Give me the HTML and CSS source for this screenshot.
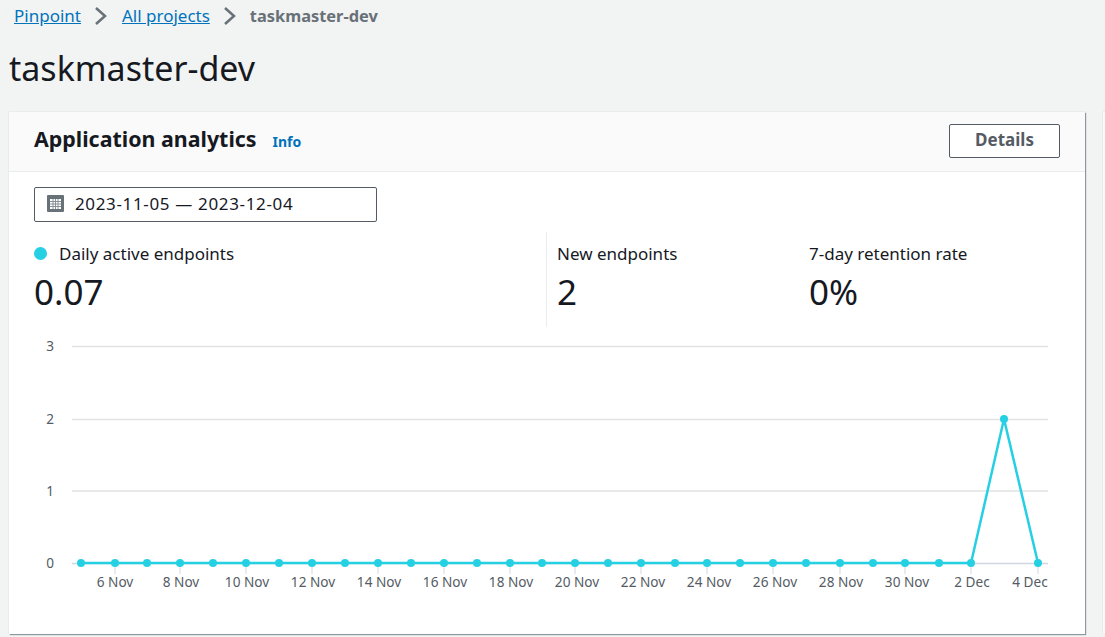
FILE: index.html
```html
<!DOCTYPE html>
<html lang="en">
<head>
    <meta charset="UTF-8">
    <title>taskmaster-dev - Pinpoint</title>
    <link rel="stylesheet" href="styles.css">
</head>
<body>
    <nav class="crumbs">
        <a href="#">Pinpoint</a>
        <svg class="crumb-sep" width="14" height="20" viewBox="0 0 14 20"><path d="M2 2l9 8-9 8" /></svg>
        <a href="#">All projects</a>
        <svg class="crumb-sep" width="14" height="20" viewBox="0 0 14 20"><path d="M2 2l9 8-9 8" /></svg>
        <span class="crumb-current">taskmaster-dev</span>
    </nav>
    <h1 class="page-title">taskmaster-dev</h1>

    <div class="content">
        <section class="card">
            <header class="card-head">
                <h2>Application analytics</h2>
                <a class="info" href="#">Info</a>
                <button class="details">Details</button>
            </header>
            <div class="card-body">
                <div class="date-range">
                    <svg width="17" height="17" viewBox="0 0 17 17">
                        <rect width="17" height="17" rx="1" fill="#687078" />
                        <path d="M3 4h11v10H3z" fill="#fff" />
                        <path d="M6 4v10M8.500 4v10M11 4v10M3 6.500h11M3 9h11M3 11.500h11" stroke="#879196" />
                    </svg>
                    <span>2023-11-05 — 2023-12-04</span>
                </div>
                <div class="stats">
                    <div class="stat stat-main">
                        <div class="stat-label"><span class="dot"></span>Daily active endpoints</div>
                        <div class="stat-value">0.07</div>
                    </div>
                    <div class="stat stat-new">
                        <div class="stat-label">New endpoints</div>
                        <div class="stat-value">2</div>
                    </div>
                    <div class="stat">
                        <div class="stat-label">7-day retention rate</div>
                        <div class="stat-value">0%</div>
                    </div>
                </div>
                <svg class="chart" width="1076" height="270" viewBox="9 335 1076 270">
                    <path class="grid" d="M72 346.500h976M72 419.500h976M72 491h976" />
                    <path class="axis" d="M72 563.500h976" />
                    <path class="ticks" d="M115 564v10M180 564v10M246 564v10M312 564v10M378 564v10M444 564v10M510 564v10M575 564v10M641 564v10M707 564v10M773 564v10M840 564v10M905 564v10M971 564v10M1038 564v10" />
                    <g class="y-labels">
                        <text x="54" y="351">3</text>
                        <text x="54" y="424">2</text>
                        <text x="54" y="496">1</text>
                        <text x="54" y="568">0</text>
                    </g>
                    <g class="x-labels">
                        <text x="115" y="587">6 Nov</text>
                        <text x="181" y="587">8 Nov</text>
                        <text x="247" y="587">10 Nov</text>
                        <text x="313" y="587">12 Nov</text>
                        <text x="379" y="587">14 Nov</text>
                        <text x="445" y="587">16 Nov</text>
                        <text x="511" y="587">18 Nov</text>
                        <text x="577" y="587">20 Nov</text>
                        <text x="643" y="587">22 Nov</text>
                        <text x="709" y="587">24 Nov</text>
                        <text x="775" y="587">26 Nov</text>
                        <text x="841" y="587">28 Nov</text>
                        <text x="907" y="587">30 Nov</text>
                        <text x="972" y="587">2 Dec</text>
                        <text x="1030" y="587">4 Dec</text>
                    </g>
                    <polyline class="line" points="81,563 971,563 1004,419 1038,563" />
                    <g class="points">
                        <circle cx="81" cy="563" r="4" /><circle cx="115" cy="563" r="4" /><circle cx="147" cy="563" r="4" />
                        <circle cx="180" cy="563" r="4" /><circle cx="213" cy="563" r="4" /><circle cx="246" cy="563" r="4" />
                        <circle cx="279" cy="563" r="4" /><circle cx="312" cy="563" r="4" /><circle cx="345" cy="563" r="4" />
                        <circle cx="378" cy="563" r="4" /><circle cx="411" cy="563" r="4" /><circle cx="444" cy="563" r="4" />
                        <circle cx="477" cy="563" r="4" /><circle cx="510" cy="563" r="4" /><circle cx="542" cy="563" r="4" />
                        <circle cx="575" cy="563" r="4" /><circle cx="608" cy="563" r="4" /><circle cx="641" cy="563" r="4" />
                        <circle cx="675" cy="563" r="4" /><circle cx="707" cy="563" r="4" /><circle cx="740" cy="563" r="4" />
                        <circle cx="773" cy="563" r="4" /><circle cx="806" cy="563" r="4" /><circle cx="840" cy="563" r="4" />
                        <circle cx="873" cy="563" r="4" /><circle cx="905" cy="563" r="4" /><circle cx="939" cy="563" r="4" />
                        <circle cx="971" cy="563" r="4" /><circle cx="1004" cy="419" r="4" /><circle cx="1038" cy="563" r="4" />
                    </g>
                </svg>
            </div>
        </section>
        <div class="next-card"></div>
    </div>
</body>
</html>
```

FILE: styles.css
```css
html, body { height: 637px; overflow: hidden; }
body { margin: 0; background-color: #f2f3f3; color: #16191f; font-family: "Noto Sans", Arial, sans-serif; font-size: 17px; }

.crumbs { display: flex; align-items: center; box-sizing: border-box; height: 32px; padding: 0 0 2px 14px; font-size: 17px; }
.crumbs a { color: #0073bb; }
.crumb-sep { margin: 2px 14px 0 13px; fill: none; stroke: #687078; stroke-width: 2.500; }
.crumb-current { margin-left: -1px; color: #687078; font-weight: 700; font-size: 16.400px; }

.page-title { margin: 14px 0 0 9px; height: 66px; font-size: 34px; line-height: 44px; font-weight: 400; }

.content { display: flex; align-items: flex-start; margin-left: 9px; }
.card { flex: none; width: 1076px; height: 522px; background: white; box-shadow: 1px 1px 1px rgba(0,28,36,0.4), 0 0 1px rgba(0,28,36,0.2); }
.next-card { flex: none; width: 2px; height: 522px; margin-left: 18px; background: #fafafa; box-shadow: 0 0 1px rgba(0,28,36,0.4); }

.card-head { display: flex; align-items: center; box-sizing: border-box; height: 60px; padding: 0 25px 2px; background: #fafafa; border-bottom: 1px solid #eaeded; }
.card-head h2 { margin: 0 16px 4px 0; font-size: 21.400px; font-weight: 700; }
.info { margin-top: 2px; color: #0073bb; font-size: 14px; font-weight: 700; text-decoration: none; }
.details { margin-left: auto; width: 111px; height: 34px; padding: 0 0 2px; background: white; border: 1px solid #545b64; border-radius: 2px; color: #545b64; font-family: inherit; font-size: 17px; font-weight: 700; }

.card-body { padding: 15px 0 0; }
.date-range { display: flex; align-items: center; gap: 11px; width: 343px; height: 35px; margin-left: 25px; padding: 0 0 2px 12px; box-sizing: border-box; border: 1px solid #545b64; border-radius: 2px; letter-spacing: 0.65px; }

.stats { display: flex; height: 95px; margin-top: 10px; }
.stat { padding-top: 9px; }
.stat-main { width: 512px; margin-left: 25px; }
.stat-new { width: 252px; padding-left: 10px; border-left: 1px solid #eaeded; }
.stat-label { display: flex; align-items: center; height: 24px; }
.dot { width: 13px; height: 13px; margin: 1px 12px 0 0; border-radius: 50%; background: #25d0e2; }
.stat-value { margin-top: 5px; font-size: 35px; line-height: 44px; }

.chart { display: block; margin-top: 8px; }
.grid { fill: none; stroke: #e1e4e4; stroke-width: 1.500; }
.axis { fill: none; stroke: #d0d7e2; stroke-width: 1.500; }
.ticks { fill: none; stroke: #d0d7e2; }
.chart text { fill: #545b64; font-size: 13.600px; font-family: "Noto Sans", Arial, sans-serif; }
.y-labels text { text-anchor: end; }
.x-labels text { text-anchor: middle; }
.line { fill: none; stroke: #25d0e2; stroke-width: 2.500; }
.points circle { fill: #25d0e2; }
```
